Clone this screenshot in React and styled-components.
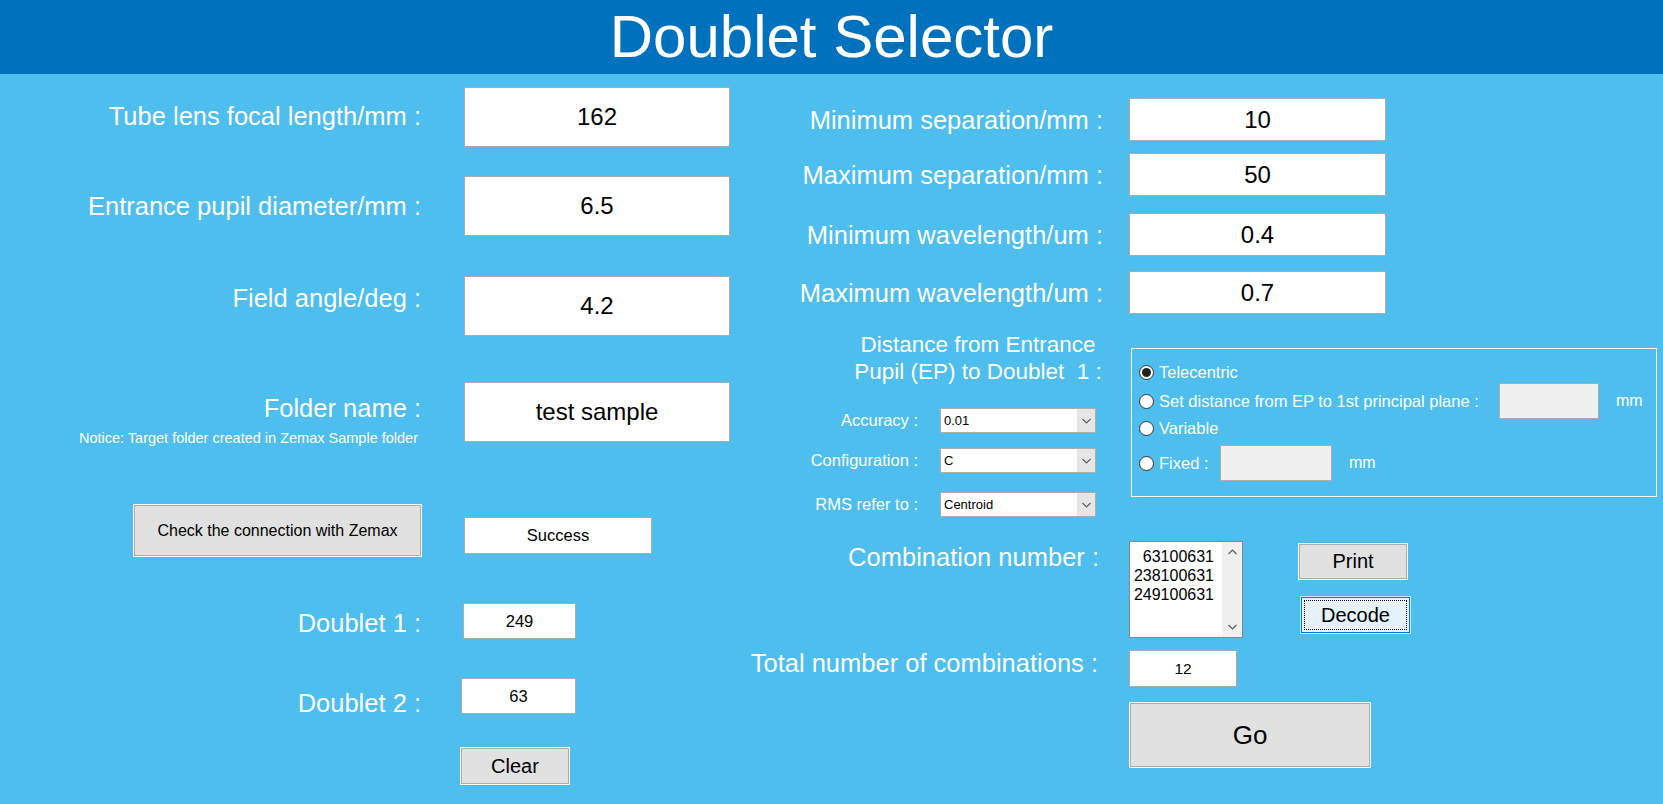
import React from "react";
import styled, { createGlobalStyle } from "styled-components";

const GlobalStyle = createGlobalStyle`
  html, body { margin: 0; padding: 0; }
  body {
    background: #4dbeee;
    font-family: "Liberation Sans", Arial, sans-serif;
  }
  * { box-sizing: border-box; }
`;

const Page = styled.div`
  width: 1663px;
  height: 804px;
  overflow: hidden;
  background: #4dbeee;
  display: flex;
  flex-direction: column;
`;

const Header = styled.header`
  height: 74px;
  background: #0072bd;
  color: #fff;
  font-size: 60px;
  line-height: 74px;
  text-align: center;
  flex-shrink: 0;
`;

const Main = styled.main`
  display: flex;
  flex: 1;
`;

const LeftColumn = styled.section`
  width: 760px;
  padding-top: 13px;
  display: flex;
  flex-direction: column;
`;

const RightColumn = styled.section`
  flex: 1;
  padding-top: 24px;
  display: flex;
  flex-direction: column;
`;

const FormRow = styled.div`
  display: flex;
  align-items: ${(p) => (p.$center ? "center" : "flex-start")};
  margin-top: ${(p) => p.$mt || 0}px;
`;

const LabelCell = styled.div`
  width: ${(p) => p.$w}px;
  flex-shrink: 0;
  display: flex;
  flex-direction: column;
  align-items: flex-end;
  padding-top: ${(p) => p.$pt || 0}px;
  padding-right: ${(p) => p.$pr || 0}px;
  margin-top: ${(p) => p.$lift ? -p.$lift : 0}px;
`;

const Label = styled.div`
  color: #fff;
  font-size: 25.5px;
  line-height: 30px;
  white-space: pre;
`;

const Notice = styled.div`
  color: #fff;
  font-size: 14.5px;
  line-height: 16px;
  margin-top: 7px;
  padding-right: 3px;
  white-space: nowrap;
`;

const FieldCell = styled.div`
  margin-left: ${(p) => p.$ml}px;
  display: flex;
  align-items: flex-start;
`;

const ValueBox = styled.input`
  width: ${(p) => p.$w}px;
  height: ${(p) => p.$h}px;
  margin: ${(p) => p.$mt || 0}px 0 0 0;
  padding: 0;
  background: #fff;
  border: 1px solid #ababab;
  border-radius: 0;
  outline: none;
  color: #000;
  font-family: "Liberation Sans", Arial, sans-serif;
  font-size: ${(p) => p.$fs || 24}px;
  text-align: center;
`;

const Button = styled.button`
  width: ${(p) => p.$w}px;
  height: ${(p) => p.$h}px;
  margin: ${(p) => p.$mt || 0}px 0 0 ${(p) => p.$ml || 0}px;
  padding: 0;
  background: #e1e1e1;
  border: 1px solid #adadad;
  border-radius: 0;
  box-shadow: 0 0 0 1px #fff;
  color: #000;
  font-family: "Liberation Sans", Arial, sans-serif;
  font-size: ${(p) => p.$fs || 16}px;
  cursor: pointer;
`;

const FocusButton = styled(Button)`
  background: #e5f1fb;
  border: 1px solid #0078d7;
  box-shadow: 0 0 0 1px #cfe6f8;
  outline: 1px dotted #000;
  outline-offset: -4px;
`;

const Heading = styled.div`
  margin-left: 92px;
  width: 252px;
  color: #fff;
  font-size: 22.5px;
  line-height: 27px;
  text-align: center;
  white-space: pre;
`;

const DistanceSection = styled.div`
  display: flex;
  align-items: flex-start;
  margin-top: 17px;
`;

const DistanceLeft = styled.div`
  width: 343px;
  flex-shrink: 0;
  display: flex;
  flex-direction: column;
`;

const SmallLabel = styled.div`
  width: 158px;
  text-align: right;
  color: #fff;
  font-size: 16.5px;
  white-space: nowrap;
`;

const Select = styled.div`
  margin-left: 22px;
  width: 156px;
  height: 25px;
  background: #fff;
  border: 1px solid #adadad;
  display: flex;
  align-items: stretch;
`;

const SelectValue = styled.div`
  flex: 1;
  padding-left: 3px;
  font-size: 13px;
  line-height: 23px;
  color: #000;
`;

const SelectArrow = styled.div`
  width: 18px;
  background: #e6e6e6;
  display: flex;
  align-items: center;
  justify-content: center;
`;

const GroupBox = styled.div`
  margin: 17px 0 0 28px;
  width: 526px;
  border: 1px solid #fff;
  padding: 12px 0 15px 7px;
  display: flex;
  flex-direction: column;
`;

const RadioRow = styled.div`
  display: flex;
  align-items: center;
  height: ${(p) => p.$h}px;
  margin-top: ${(p) => p.$mt || 0}px;
`;

const RadioCircle = styled.span`
  width: 15px;
  height: 15px;
  border-radius: 50%;
  border: 1px solid #333;
  background: #fff;
  flex-shrink: 0;
  display: flex;
  align-items: center;
  justify-content: center;
  &::after {
    content: "";
    width: 9px;
    height: 9px;
    border-radius: 50%;
    background: ${(p) => (p.$checked ? "#222" : "transparent")};
  }
`;

const RadioText = styled.span`
  margin-left: 5px;
  min-width: ${(p) => p.$w || 0}px;
  color: #fff;
  font-size: 16.5px;
  white-space: nowrap;
`;

const GrayInput = styled.div`
  width: ${(p) => p.$w}px;
  height: 36px;
  background: #f0f0f0;
  border: 1px solid #adadad;
`;

const Unit = styled.span`
  margin-left: 17px;
  color: #fff;
  font-size: 16px;
`;

const ListBox = styled.div`
  margin-left: 26px;
  width: 114px;
  height: 97px;
  background: #fff;
  border: 1px solid #828790;
  display: flex;
`;

const ListItems = styled.div`
  flex: 1;
  padding: 5px 8px 0 0;
  text-align: right;
  font-size: 16px;
  line-height: 19px;
  color: #000;
`;

const ScrollBar = styled.div`
  width: 20px;
  background: #f0f0f0;
  display: flex;
  flex-direction: column;
  justify-content: space-between;
  align-items: center;
  padding: 7px 0;
`;

const ButtonStack = styled.div`
  margin-left: 56px;
  display: flex;
  flex-direction: column;
  padding-top: 3px;
`;

const GoRow = styled.div`
  margin-top: 16px;
  padding-left: 370px;
`;

const Chevron = ({ up }) => (
  <svg width="9" height="6" viewBox="0 0 9 6">
    <path
      d={up ? "M0.5 5 L4.5 1 L8.5 5" : "M0.5 1 L4.5 5 L8.5 1"}
      fill="none"
      stroke="#606060"
      strokeWidth="1.2"
    />
  </svg>
);

const leftRows = [
  { label: "Tube lens focal length/mm :", value: "162", mt: 0, pt: 14 },
  { label: "Entrance pupil diameter/mm :", value: "6.5", mt: 29, pt: 15 },
  { label: "Field angle/deg :", value: "4.2", mt: 40, pt: 7 },
];

const rightRows = [
  { label: "Minimum separation/mm :", value: "10", mt: 0 },
  { label: "Maximum separation/mm :", value: "50", mt: 12 },
  { label: "Minimum wavelength/um :", value: "0.4", mt: 17 },
  { label: "Maximum wavelength/um :", value: "0.7", mt: 15 },
];

const selects = [
  { label: "Accuracy :", value: "0.01", mt: 23 },
  { label: "Configuration :", value: "C", mt: 15 },
  { label: "RMS refer to :", value: "Centroid", mt: 19 },
];

export default function App() {
  return (
    <Page>
      <GlobalStyle />
      <Header>Doublet Selector</Header>
      <Main>
        <LeftColumn>
          {leftRows.map((r) => (
            <FormRow key={r.label} $mt={r.mt}>
              <LabelCell $w={421} $pt={r.pt}>
                <Label>{r.label}</Label>
              </LabelCell>
              <FieldCell $ml={43}>
                <ValueBox readOnly value={r.value} $w={266} $h={60} />
              </FieldCell>
            </FormRow>
          ))}
          <FormRow $mt={46}>
            <LabelCell $w={421} $pt={11}>
              <Label>Folder name :</Label>
              <Notice>Notice: Target folder created in Zemax Sample folder</Notice>
            </LabelCell>
            <FieldCell $ml={43}>
              <ValueBox readOnly value="test sample" $w={266} $h={60} />
            </FieldCell>
          </FormRow>
          <FormRow $mt={59}>
            <LabelCell $w={421}>
              <Button $w={287} $h={51} $fs={16}>
                Check the connection with Zemax
              </Button>
            </LabelCell>
            <FieldCell $ml={43}>
              <ValueBox readOnly value="Success" $w={188} $h={37} $mt={12} $fs={16.5} />
            </FieldCell>
          </FormRow>
          <FormRow $mt={47}>
            <LabelCell $w={421} $pt={5}>
              <Label>Doublet 1 :</Label>
            </LabelCell>
            <FieldCell $ml={42}>
              <ValueBox readOnly value="249" $w={113} $h={36} $fs={16.5} />
            </FieldCell>
          </FormRow>
          <FormRow $mt={39}>
            <LabelCell $w={421} $pt={10}>
              <Label>Doublet 2 :</Label>
            </LabelCell>
            <FieldCell $ml={40}>
              <ValueBox readOnly value="63" $w={115} $h={36} $fs={16.5} />
            </FieldCell>
          </FormRow>
          <FormRow $mt={30}>
            <LabelCell $w={421} />
            <FieldCell $ml={40}>
              <Button $w={108} $h={36} $fs={20}>
                Clear
              </Button>
            </FieldCell>
          </FormRow>
        </LeftColumn>

        <RightColumn>
          {rightRows.map((r) => (
            <FormRow key={r.label} $mt={r.mt} $center>
              <LabelCell $w={343}>
                <Label>{r.label}</Label>
              </LabelCell>
              <FieldCell $ml={26}>
                <ValueBox readOnly value={r.value} $w={257} $h={43} />
              </FieldCell>
            </FormRow>
          ))}

          <DistanceSection>
            <DistanceLeft>
              <Heading>{"Distance from Entrance\nPupil (EP) to Doublet  1 :"}</Heading>
              {selects.map((s) => (
                <FormRow key={s.label} $mt={s.mt} $center>
                  <SmallLabel>{s.label}</SmallLabel>
                  <Select>
                    <SelectValue>{s.value}</SelectValue>
                    <SelectArrow>
                      <Chevron />
                    </SelectArrow>
                  </Select>
                </FormRow>
              ))}
            </DistanceLeft>
            <GroupBox>
              <RadioRow $h={22}>
                <RadioCircle $checked />
                <RadioText>Telecentric</RadioText>
              </RadioRow>
              <RadioRow $h={36}>
                <RadioCircle />
                <RadioText $w={340}>Set distance from EP to 1st principal plane :</RadioText>
                <GrayInput $w={100} />
                <Unit>mm</Unit>
              </RadioRow>
              <RadioRow $h={18}>
                <RadioCircle />
                <RadioText>Variable</RadioText>
              </RadioRow>
              <RadioRow $h={36} $mt={8}>
                <RadioCircle />
                <RadioText $w={61}>Fixed :</RadioText>
                <GrayInput $w={112} />
                <Unit>mm</Unit>
              </RadioRow>
            </GroupBox>
          </DistanceSection>

          <FormRow $mt={24}>
            <LabelCell $w={343} $pt={1} $pr={4}>
              <Label>Combination number :</Label>
            </LabelCell>
            <ListBox>
              <ListItems>
                <div>63100631</div>
                <div>238100631</div>
                <div>249100631</div>
              </ListItems>
              <ScrollBar>
                <Chevron up />
                <Chevron />
              </ScrollBar>
            </ListBox>
            <ButtonStack>
              <Button $w={108} $h={35} $fs={20}>
                Print
              </Button>
              <FocusButton $w={109} $h={36} $fs={20} $mt={18} $ml={2}>
                Decode
              </FocusButton>
            </ButtonStack>
          </FormRow>

          <FormRow $mt={12}>
            <LabelCell $w={343} $pr={5} $lift={2}>
              <Label>Total number of combinations :</Label>
            </LabelCell>
            <FieldCell $ml={26}>
              <ValueBox readOnly value="12" $w={108} $h={37} $fs={15.5} />
            </FieldCell>
          </FormRow>

          <GoRow>
            <Button $w={240} $h={64} $fs={26}>
              Go
            </Button>
          </GoRow>
        </RightColumn>
      </Main>
    </Page>
  );
}
